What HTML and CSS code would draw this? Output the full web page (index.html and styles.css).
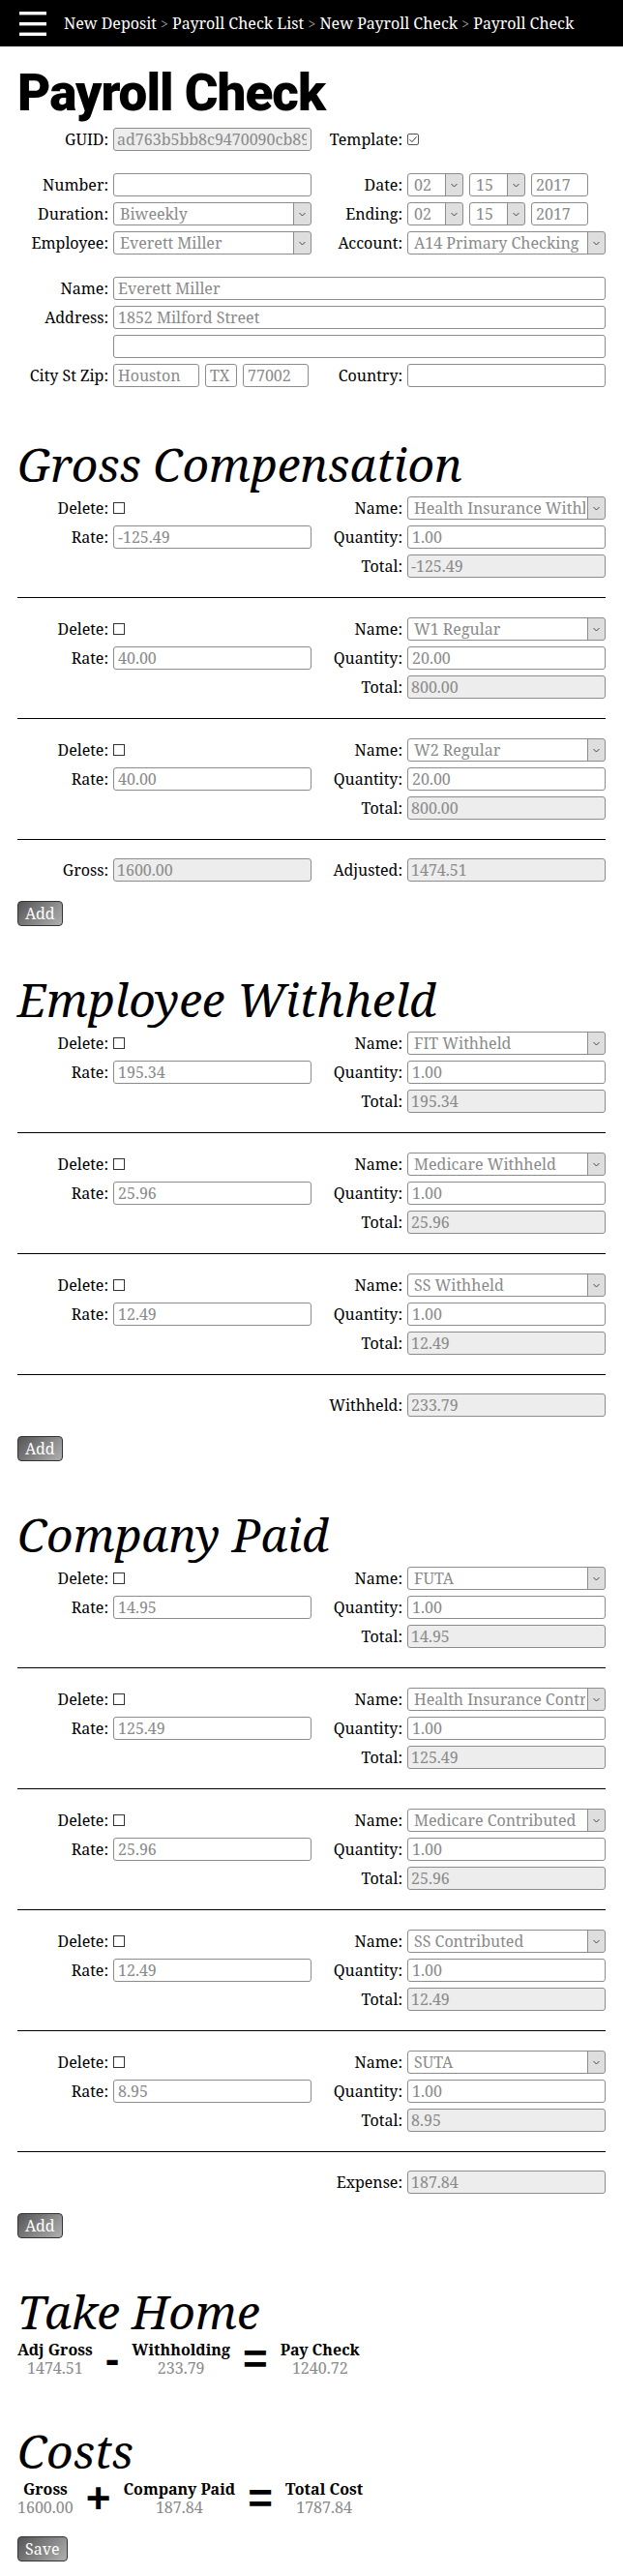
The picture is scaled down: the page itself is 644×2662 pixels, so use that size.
FILE: index.html
```html
<!DOCTYPE html>
<html lang="en">
<head>
<meta charset="utf-8">
<title>Payroll Check</title>
<link rel="stylesheet" href="styles.css">
</head>
<body>
<header class="topbar">
  <button class="menu" type="button" aria-label="Menu">
    <svg width="28" height="25" viewBox="0 0 28 25"><rect x="0" y="0" width="28" height="3.4"/><rect x="0" y="11" width="28" height="3.4"/><rect x="0" y="21.6" width="28" height="3.4"/></svg>
  </button>
  <nav class="crumbs">
    <a href="#">New Deposit</a> <span class="sep">&gt;</span> <a href="#">Payroll Check List</a> <span class="sep">&gt;</span> <a href="#">New Payroll Check</a> <span class="sep">&gt;</span> <span class="current">Payroll Check</span>
  </nav>
</header>

<main class="page">
  <h1 class="title">Payroll Check</h1>

  <section class="form-grid sec-guid">
    <label class="lbl">GUID:</label>
    <input class="field ro" readonly value="ad763b5bb8c9470090cb89f2e1a4d7c3">
    <label class="lbl">Template:</label>
    <div class="cell"><input type="checkbox" class="check" checked></div>
  </section>

  <section class="form-grid sec-gap">
    <label class="lbl">Number:</label>
    <input class="field" value="">
    <label class="lbl">Date:</label>
    <div class="date">
      <select class="field sel"><option>02</option></select>
      <select class="field sel"><option>15</option></select>
      <input class="field" value="2017">
    </div>

    <label class="lbl">Duration:</label>
    <select class="field sel"><option>Biweekly</option></select>
    <label class="lbl">Ending:</label>
    <div class="date">
      <select class="field sel"><option>02</option></select>
      <select class="field sel"><option>15</option></select>
      <input class="field" value="2017">
    </div>

    <label class="lbl">Employee:</label>
    <select class="field sel"><option>Everett Miller</option></select>
    <label class="lbl">Account:</label>
    <select class="field sel"><option>A14 Primary Checking</option></select>
  </section>

  <section class="form-grid sec-gap">
    <label class="lbl">Name:</label>
    <input class="field wide" value="Everett Miller">
    <label class="lbl">Address:</label>
    <input class="field wide" value="1852 Milford Street">
    <span class="lbl"></span>
    <input class="field wide" value="">
    <label class="lbl">City St Zip:</label>
    <div class="city">
      <input class="field" value="Houston">
      <input class="field" value="TX">
      <input class="field" value="77002">
    </div>
    <label class="lbl">Country:</label>
    <input class="field" value="">
  </section>

  <section class="block first">
    <h2 class="heading">Gross Compensation</h2>
    <div class="item">
      <span class="lbl">Delete:</span><div class="cell"><input type="checkbox" class="check"></div>
      <span class="lbl">Name:</span><select class="field sel"><option>Health Insurance Withheld</option></select>
      <span class="lbl">Rate:</span><input class="field" value="-125.49">
      <span class="lbl">Quantity:</span><input class="field" value="1.00">
      <span class="lbl skip2">Total:</span><input class="field ro" readonly value="-125.49">
    </div>
    <div class="item">
      <span class="lbl">Delete:</span><div class="cell"><input type="checkbox" class="check"></div>
      <span class="lbl">Name:</span><select class="field sel"><option>W1 Regular</option></select>
      <span class="lbl">Rate:</span><input class="field" value="40.00">
      <span class="lbl">Quantity:</span><input class="field" value="20.00">
      <span class="lbl skip2">Total:</span><input class="field ro" readonly value="800.00">
    </div>
    <div class="item">
      <span class="lbl">Delete:</span><div class="cell"><input type="checkbox" class="check"></div>
      <span class="lbl">Name:</span><select class="field sel"><option>W2 Regular</option></select>
      <span class="lbl">Rate:</span><input class="field" value="40.00">
      <span class="lbl">Quantity:</span><input class="field" value="20.00">
      <span class="lbl skip2">Total:</span><input class="field ro" readonly value="800.00">
    </div>
    <div class="summary">
      <span class="lbl">Gross:</span><input class="field ro" readonly value="1600.00">
      <span class="lbl">Adjusted:</span><input class="field ro" readonly value="1474.51">
    </div>
    <button class="btn" type="button">Add</button>
  </section>

  <section class="block">
    <h2 class="heading">Employee Withheld</h2>
    <div class="item">
      <span class="lbl">Delete:</span><div class="cell"><input type="checkbox" class="check"></div>
      <span class="lbl">Name:</span><select class="field sel"><option>FIT Withheld</option></select>
      <span class="lbl">Rate:</span><input class="field" value="195.34">
      <span class="lbl">Quantity:</span><input class="field" value="1.00">
      <span class="lbl skip2">Total:</span><input class="field ro" readonly value="195.34">
    </div>
    <div class="item">
      <span class="lbl">Delete:</span><div class="cell"><input type="checkbox" class="check"></div>
      <span class="lbl">Name:</span><select class="field sel"><option>Medicare Withheld</option></select>
      <span class="lbl">Rate:</span><input class="field" value="25.96">
      <span class="lbl">Quantity:</span><input class="field" value="1.00">
      <span class="lbl skip2">Total:</span><input class="field ro" readonly value="25.96">
    </div>
    <div class="item">
      <span class="lbl">Delete:</span><div class="cell"><input type="checkbox" class="check"></div>
      <span class="lbl">Name:</span><select class="field sel"><option>SS Withheld</option></select>
      <span class="lbl">Rate:</span><input class="field" value="12.49">
      <span class="lbl">Quantity:</span><input class="field" value="1.00">
      <span class="lbl skip2">Total:</span><input class="field ro" readonly value="12.49">
    </div>
    <div class="summary">
      <span class="lbl skip2">Withheld:</span><input class="field ro" readonly value="233.79">
    </div>
    <button class="btn" type="button">Add</button>
  </section>

  <section class="block">
    <h2 class="heading">Company Paid</h2>
    <div class="item">
      <span class="lbl">Delete:</span><div class="cell"><input type="checkbox" class="check"></div>
      <span class="lbl">Name:</span><select class="field sel"><option>FUTA</option></select>
      <span class="lbl">Rate:</span><input class="field" value="14.95">
      <span class="lbl">Quantity:</span><input class="field" value="1.00">
      <span class="lbl skip2">Total:</span><input class="field ro" readonly value="14.95">
    </div>
    <div class="item">
      <span class="lbl">Delete:</span><div class="cell"><input type="checkbox" class="check"></div>
      <span class="lbl">Name:</span><select class="field sel"><option>Health Insurance Contributed</option></select>
      <span class="lbl">Rate:</span><input class="field" value="125.49">
      <span class="lbl">Quantity:</span><input class="field" value="1.00">
      <span class="lbl skip2">Total:</span><input class="field ro" readonly value="125.49">
    </div>
    <div class="item">
      <span class="lbl">Delete:</span><div class="cell"><input type="checkbox" class="check"></div>
      <span class="lbl">Name:</span><select class="field sel"><option>Medicare Contributed</option></select>
      <span class="lbl">Rate:</span><input class="field" value="25.96">
      <span class="lbl">Quantity:</span><input class="field" value="1.00">
      <span class="lbl skip2">Total:</span><input class="field ro" readonly value="25.96">
    </div>
    <div class="item">
      <span class="lbl">Delete:</span><div class="cell"><input type="checkbox" class="check"></div>
      <span class="lbl">Name:</span><select class="field sel"><option>SS Contributed</option></select>
      <span class="lbl">Rate:</span><input class="field" value="12.49">
      <span class="lbl">Quantity:</span><input class="field" value="1.00">
      <span class="lbl skip2">Total:</span><input class="field ro" readonly value="12.49">
    </div>
    <div class="item">
      <span class="lbl">Delete:</span><div class="cell"><input type="checkbox" class="check"></div>
      <span class="lbl">Name:</span><select class="field sel"><option>SUTA</option></select>
      <span class="lbl">Rate:</span><input class="field" value="8.95">
      <span class="lbl">Quantity:</span><input class="field" value="1.00">
      <span class="lbl skip2">Total:</span><input class="field ro" readonly value="8.95">
    </div>
    <div class="summary">
      <span class="lbl skip2">Expense:</span><input class="field ro" readonly value="187.84">
    </div>
    <button class="btn" type="button">Add</button>
  </section>

  <section class="block">
    <h2 class="heading">Take Home</h2>
    <div class="equation">
      <div class="term"><span class="term-label">Adj Gross</span><span class="term-value">1474.51</span></div>
      <span class="op">-</span>
      <div class="term"><span class="term-label">Withholding</span><span class="term-value">233.79</span></div>
      <span class="op">=</span>
      <div class="term"><span class="term-label">Pay Check</span><span class="term-value">1240.72</span></div>
    </div>
  </section>

  <section class="block">
    <h2 class="heading">Costs</h2>
    <div class="equation">
      <div class="term"><span class="term-label">Gross</span><span class="term-value">1600.00</span></div>
      <span class="op">+</span>
      <div class="term"><span class="term-label">Company Paid</span><span class="term-value">187.84</span></div>
      <span class="op">=</span>
      <div class="term"><span class="term-label">Total Cost</span><span class="term-value">1787.84</span></div>
    </div>
    <button class="btn save" type="button">Save</button>
  </section>
</main>
</body>
</html>
```

FILE: styles.css
```css
* { box-sizing: border-box; }

html, body { margin: 0; padding: 0; }

body {
  font-family: "Noto Serif", "DejaVu Serif", serif;
  font-size: 16px;
  color: #000;
  background: #fff;
}

/* top bar */
.topbar {
  height: 48px;
  background: #000;
  display: flex;
  align-items: center;
  padding-left: 20px;
}
.menu {
  background: none;
  border: 0;
  padding: 0;
  margin: 0 18px 0 0;
  width: 28px;
  height: 25px;
}
.menu svg { display: block; fill: #fff; }
.crumbs {
  color: #fff;
  font-size: 16px;
  white-space: nowrap;
}
.crumbs a, .crumbs .current { color: #fff; text-decoration: none; }
.crumbs .sep { color: #999; font-size: 14px; }

/* page */
.page { padding: 22px 18px 17px; }

.title {
  font-family: Roboto, "Liberation Sans", sans-serif;
  font-weight: 900;
  font-size: 53px;
  line-height: 53px;
  letter-spacing: -1px;
  margin: 0 0 9px;
}

/* form grids */
.form-grid, .item, .summary {
  display: grid;
  grid-template-columns: 94px 205px 89px 205px;
  column-gap: 5px;
  row-gap: 6px;
  grid-auto-rows: 24px;
  align-items: center;
}
.sec-gap { margin-top: 23px; }

.lbl {
  text-align: right;
  white-space: nowrap;
  line-height: 24px;
}
.skip2 { grid-column: 3; }
.wide { grid-column: 2 / span 3; }

.cell { display: flex; align-items: center; height: 24px; }

.field {
  display: block;
  width: 100%;
  height: 24px;
  margin: 0;
  border: 1px solid #8c8c8c;
  border-radius: 3px;
  padding: 0 4px;
  font-family: inherit;
  font-size: 16px;
  color: #8a8a8a;
  background-color: #fff;
  outline: none;
}
.field.ro { background-color: #ededed; padding-left: 3px; }

.sel {
  appearance: none;
  -webkit-appearance: none;
  padding: 0 20px 0 6px;
  background:
    url("data:image/svg+xml,%3Csvg xmlns='http://www.w3.org/2000/svg' width='7' height='5' viewBox='0 0 7 5'%3E%3Cpath d='M0.5 1l3 3 3-3' fill='none' stroke='%23444' stroke-width='1'/%3E%3C/svg%3E") right 5px center / 7px 5px no-repeat,
    linear-gradient(#8c8c8c, #8c8c8c) right 17px top / 1px 100% no-repeat,
    linear-gradient(#dedede, #dedede) right top / 17px 100% no-repeat,
    #fff;
}

.date {
  display: grid;
  grid-template-columns: 58px 58px 59px;
  column-gap: 6px;
}
.city {
  display: grid;
  grid-template-columns: 89px 33px 68px;
  column-gap: 6px;
}

.check {
  -webkit-appearance: none;
  appearance: none;
  width: 12px;
  height: 12px;
  margin: 0;
  border: 1px solid #333;
  background: #fff;
}
.check:checked {
  border-color: #555;
  border-radius: 2px;
  background: #fff url("data:image/svg+xml,%3Csvg xmlns='http://www.w3.org/2000/svg' width='10' height='10' viewBox='0 0 10 10'%3E%3Cpath d='M1.5 5.2l2.4 2.4 4.6-5.2' fill='none' stroke='%23333' stroke-width='1'/%3E%3C/svg%3E") center / 10px 10px no-repeat;
}

/* blocks */
.block { margin-top: 50px; }
.block.first { margin-top: 54px; }

.heading {
  font-style: italic;
  font-weight: 400;
  font-size: 48px;
  line-height: 52px;
  margin: 0 0 7px;
}

.item {
  padding: 20px 0;
  border-bottom: 1px solid #000;
}
.heading + .item { padding-top: 0; }

.summary { margin-top: 19px; }

.btn {
  display: block;
  height: 26px;
  margin: 20px 0 0;
  padding: 0 7px;
  font-family: inherit;
  font-size: 16px;
  color: #fff;
  background: linear-gradient(135deg, #555 0%, #b0b0b0 100%);
  border: 1px solid #333;
  border-radius: 4px;
}

/* equations */
.equation {
  display: flex;
  align-items: center;
  margin-top: -3px;
}
.term {
  display: flex;
  flex-direction: column;
  align-items: center;
  line-height: 19px;
}
.term-label { font-weight: 700; }
.term-value { color: #8a8a8a; }
.op {
  font-family: "Liberation Sans", Arial, sans-serif;
  font-weight: 700;
  font-size: 44px;
  line-height: 30px;
  margin: 0 13px;
}
```
